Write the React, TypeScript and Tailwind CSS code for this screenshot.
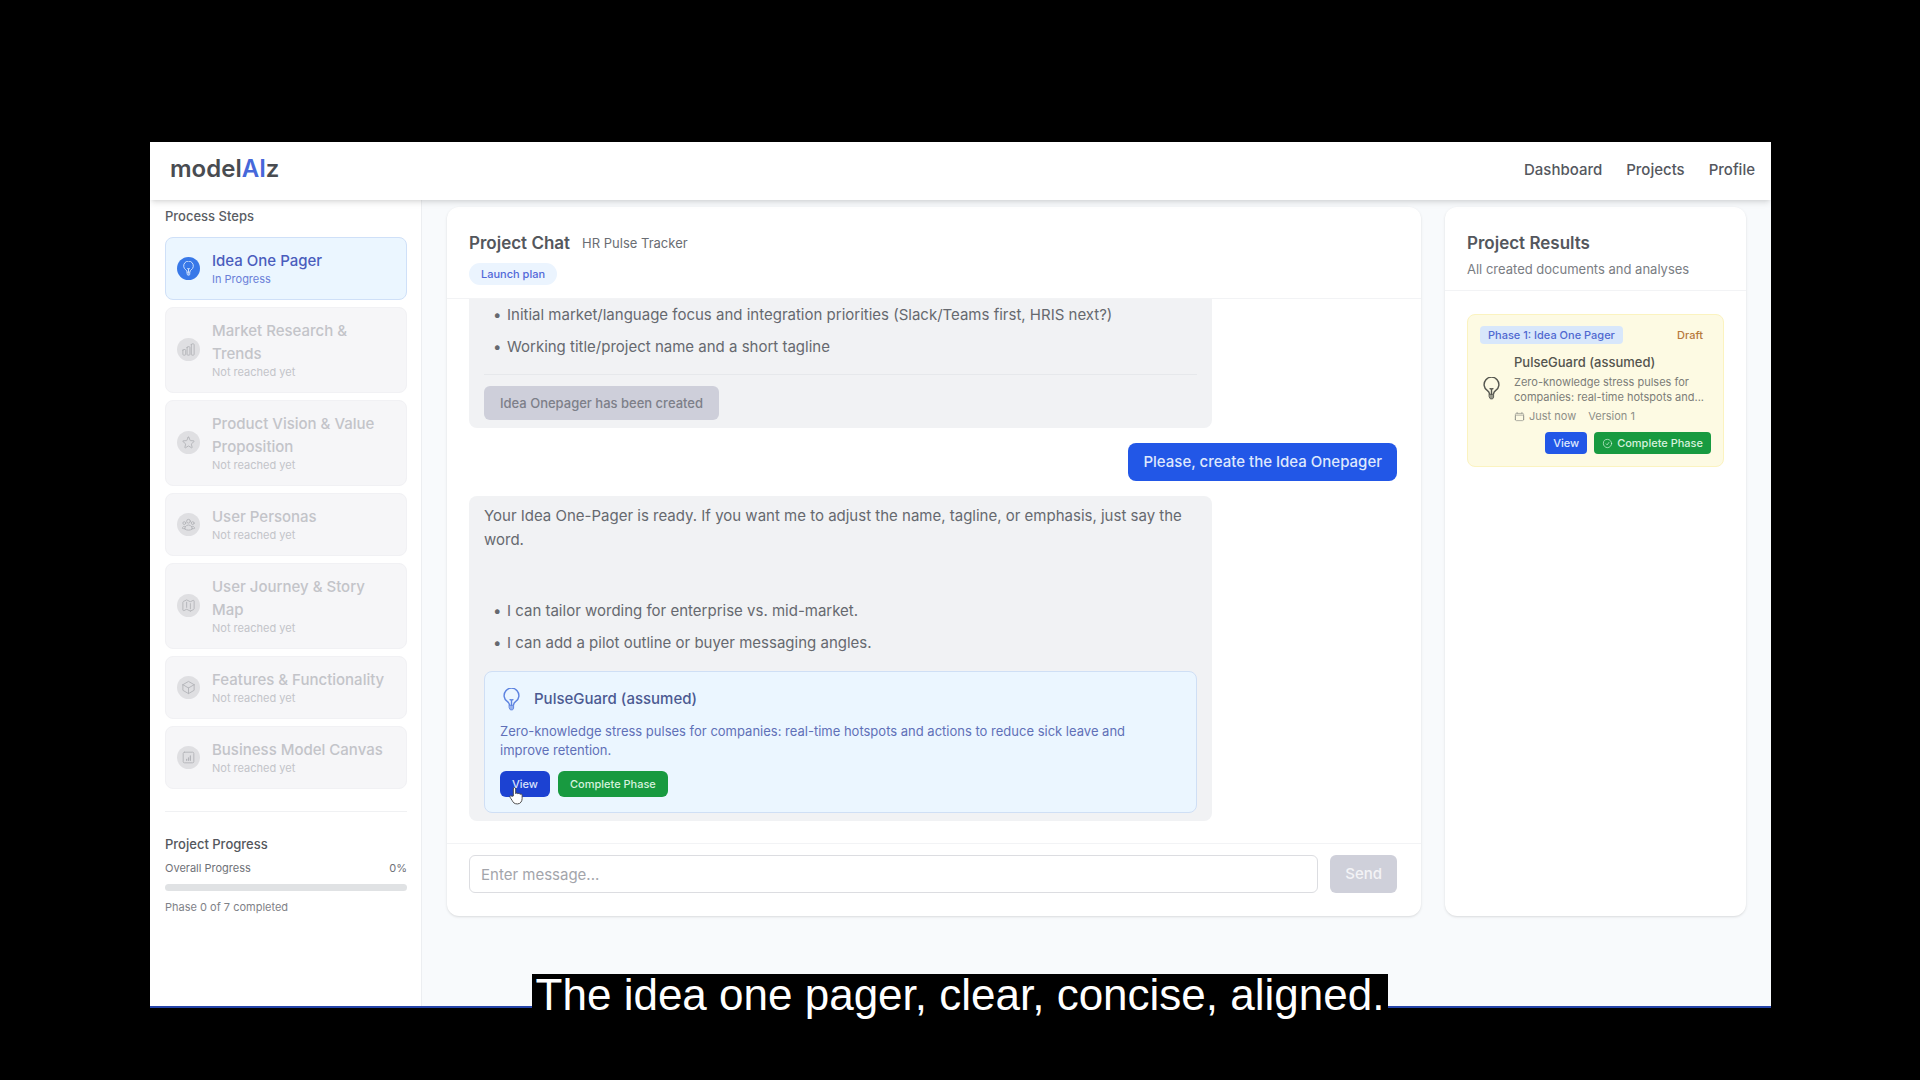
import { useState } from 'react';
import type { ReactNode } from 'react';
import {
  HiOutlineCalendar,
  HiOutlineChartBar,
  HiOutlineCheckCircle,
  HiOutlineCube,
  HiOutlineMap,
  HiOutlineStar,
  HiOutlineUserGroup,
} from 'react-icons/hi2';

const steps = [
  { title: 'Idea One Pager', status: 'In Progress', icon: BulbIcon, active: true },
  { title: 'Market Research & Trends', status: 'Not reached yet', icon: HiOutlineChartBar },
  { title: 'Product Vision & Value Proposition', status: 'Not reached yet', icon: HiOutlineStar },
  { title: 'User Personas', status: 'Not reached yet', icon: HiOutlineUserGroup },
  { title: 'User Journey & Story Map', status: 'Not reached yet', icon: HiOutlineMap },
  { title: 'Features & Functionality', status: 'Not reached yet', icon: HiOutlineCube },
  { title: 'Business Model Canvas', status: 'Not reached yet', icon: CanvasIcon },
];

function BulbIcon({ className }: { className?: string }) {
  return (
    <svg viewBox="0 0 24 24" fill="none" stroke="currentColor" strokeWidth="1.5" strokeLinecap="round" strokeLinejoin="round" className={className}>
      <path d="M9.8 17.500c0-1.400-.7-2.300-2-3.200a7.700 7.700 0 1 1 8.400 0c-1.300.9-2 1.800-2 3.200" />
      <path d="M12 18v-5.500M10.500 12.200l1.500.6 1.500-.6" />
      <path d="M9.800 18h4.400v3l-1 1.800h-2.400l-1-1.800z" fill="currentColor" fillOpacity="0.6" strokeWidth="1" />
    </svg>
  );
}

function CanvasIcon({ className }: { className?: string }) {
  return (
    <svg viewBox="0 0 24 24" fill="none" stroke="currentColor" strokeWidth="1.5" strokeLinecap="round" strokeLinejoin="round" className={className}>
      <rect x="3.5" y="3.5" width="17" height="17" rx="2" />
      <path d="M9 16.500v-1.500M12 16.500v-4M15 16.500v-7" strokeWidth="2" />
    </svg>
  );
}

function HandCursor() {
  return (
    <svg viewBox="0 0 16 20" className="absolute left-[9px] top-[15px] h-[19px] w-[15px]" aria-hidden="true">
      <path
        d="M4.600 10.500V3c0-1.900 2.500-1.900 2.500 0v5c.4-1 2.200-.9 2.400.3.500-.9 2.100-.7 2.300.5.700-.7 2.200-.3 2.200 1v3.400c0 2.600-1.500 5.800-5 5.800-3.600 0-4.600-1.700-5.600-3.600-.7-1.400-1.900-2.500-2.300-3.600-.5-1.400 1-2.100 2-.9z"
        fill="#fff"
        stroke="#444"
        strokeWidth="1"
        strokeLinejoin="round"
      />
    </svg>
  );
}

function Header() {
  return (
    <header className="relative z-10 flex h-[58px] items-center justify-between bg-white pb-1 pl-5 pr-4 shadow-md">
      <a href="#" className="text-[24px] leading-8 font-semibold text-[#494c51]">
        model<span className="text-[#4668da]">AI</span>z
      </a>
      <nav className="flex gap-6 pt-px text-[15px] leading-6 font-medium text-[#54575e]">
        <a href="#">Dashboard</a>
        <a href="#">Projects</a>
        <a href="#">Profile</a>
      </nav>
    </header>
  );
}

function Sidebar() {
  return (
    <aside className="w-[272px] shrink-0 border-r border-[#eceef1] bg-white pt-[7px] pr-[14px] pl-[15px]">
      <h2 className="mb-[11px] text-[13px] leading-[19px] font-medium text-[#5a5d64]">Process Steps</h2>
      <ul className="flex flex-col gap-[7px]">
        {steps.map((step) => (
          <li key={step.title}>
            <button
              disabled={!step.active}
              className={`flex w-full items-center gap-3 rounded-lg border px-[11px] pt-[11px] pb-3 text-left ${
                step.active ? 'border-[#cfe0f8] bg-[#ebf6ff]' : 'border-[#f1f1f4] bg-[#f6f6f8]'
              }`}
            >
              <span
                className={`flex size-[23px] shrink-0 items-center justify-center rounded-full ${
                  step.active ? 'bg-[#3878e8] text-[#d5e6fd]' : 'bg-[#dfdfe2] text-[#b4b5ba]'
                }`}
              >
                <step.icon className="size-[15px]" />
              </span>
              <span className="min-w-0 flex-1">
                <span className={`block text-[15px] leading-[23px] font-medium ${step.active ? 'text-[#4a5dbd]' : 'text-[#c3c4c9]'}`}>
                  {step.title}
                </span>
                <span className={`block text-[11px] leading-[15px] ${step.active ? 'text-[#6a80d8]' : 'text-[#c3c4c9]'}`}>
                  {step.status}
                </span>
              </span>
            </button>
          </li>
        ))}
      </ul>

      <div className="mt-[22px] border-t border-[#f0f1f3] pt-[23px]">
        <h3 className="text-[13px] leading-[18px] font-medium text-[#54575d]">Project Progress</h3>
        <div className="mt-[7px] flex justify-between text-[11px] leading-4 text-[#6f7278]">
          <span>Overall Progress</span>
          <span>0%</span>
        </div>
        <div role="progressbar" aria-valuenow={0} aria-label="Overall Progress" className="mt-2 h-[7px] rounded-full bg-[#e0e2e4]" />
        <p className="mt-2 text-[11px] leading-4 text-[#7f8288]">Phase 0 of 7 completed</p>
      </div>
    </aside>
  );
}

function BotMessage({ className, children }: { className: string; children: ReactNode }) {
  return <div className={`w-[743px] max-w-full bg-[#f1f2f4] px-[15px] text-[15px] text-[#66696f] ${className}`}>{children}</div>;
}

function BulletList({ className = '', items }: { className?: string; items: string[] }) {
  return (
    <ul className={`flex flex-col gap-2 pl-[9px] leading-6 ${className}`}>
      {items.map((item) => (
        <li key={item} className="flex before:w-[14px] before:shrink-0 before:content-['•']">
          {item}
        </li>
      ))}
    </ul>
  );
}

function Chat() {
  const [message, setMessage] = useState('');

  return (
    <section className="flex min-w-0 flex-1 flex-col rounded-xl bg-white shadow-sm">
      <div className="border-b border-[#f2f3f5] px-[22px] pt-6 pb-[13px]">
        <div className="flex items-center gap-3">
          <h1 className="text-[17px] leading-6 font-semibold text-[#54575d]">Project Chat</h1>
          <span className="text-[13px] leading-5 text-[#6a6d73]">HR Pulse Tracker</span>
        </div>
        <span className="mt-2 inline-block rounded-full bg-[#ebf4fe] px-3 text-[11px] leading-[22px] font-medium text-[#5269d8]">
          Launch plan
        </span>
      </div>

      <div className="flex flex-1 flex-col gap-[15px] pr-6 pl-[22px]">
        <BotMessage className="rounded-b-lg pt-1 pb-2">
          <BulletList
            items={[
              'Initial market/language focus and integration priorities (Slack/Teams first, HRIS next?)',
              'Working title/project name and a short tagline',
            ]}
          />
          <div className="mt-[15px] border-t border-[#e6e8eb] pt-[11px]">
            <button disabled className="rounded-md bg-[#cecfda] px-4 text-[13px] leading-[34px] font-medium text-[#7d7f89]">
              Idea Onepager has been created
            </button>
          </div>
        </BotMessage>

        <div className="self-end rounded-lg bg-[#2257e7] px-[15px] text-[15px] leading-[38px] font-medium text-[#dfe8fd]">
          Please, create the Idea Onepager
        </div>

        <BotMessage className="rounded-lg pt-2 pb-2">
          <p className="leading-6">
            Your Idea One-Pager is ready. If you want me to adjust the name, tagline, or emphasis, just say the word.
          </p>
          <BulletList
            className="mt-[47px]"
            items={['I can tailor wording for enterprise vs. mid-market.', 'I can add a pilot outline or buyer messaging angles.']}
          />
          <div className="mt-4 rounded-lg border border-[#cfdff5] bg-[#ebf6ff] p-[15px]">
            <div className="flex items-center gap-[11px]">
              <BulbIcon className="size-[23px] text-[#5d83e0]" />
              <h4 className="text-[15px] leading-6 font-medium text-[#4c5a92]">PulseGuard (assumed)</h4>
            </div>
            <p className="mt-[11px] pr-[15px] text-[13px] leading-[19px] text-[#6070b8]">
              Zero-knowledge stress pulses for companies: real-time hotspots and actions to reduce sick leave and improve retention.
            </p>
            <div className="mt-[11px] flex gap-2">
              <button className="relative rounded-md bg-[#1c42d2] px-3 text-[11px] leading-[26px] font-medium text-[#d8e1fb]">
                View
                <HandCursor />
              </button>
              <button className="rounded-md bg-[#189a40] px-3 text-[11px] leading-[26px] font-medium text-[#d6f2de]">
                Complete Phase
              </button>
            </div>
          </div>
        </BotMessage>
      </div>

      <form className="mt-[22px] flex gap-3 border-t border-[#f2f3f5] pt-[11px] pr-6 pb-[23px] pl-[22px]" onSubmit={(e) => e.preventDefault()}>
        <input
          type="text"
          aria-label="Message"
          placeholder="Enter message..."
          value={message}
          onChange={(e) => setMessage(e.target.value)}
          className="h-[38px] min-w-0 flex-1 rounded-md border border-[#dcdde1] px-[11px] text-[15px] placeholder:text-[#a3a5ab]"
        />
        <button disabled={!message} className="rounded-md bg-[#cfd0da] px-[15px] text-[15px] leading-[38px] font-medium text-[#f3f3f6]">
          Send
        </button>
      </form>
    </section>
  );
}

function Results() {
  return (
    <section className="w-[301px] shrink-0 rounded-xl bg-white shadow-sm">
      <div className="border-b border-[#f2f3f5] px-[22px] pt-6 pb-[11px]">
        <h2 className="text-[17px] leading-6 font-semibold text-[#54575d]">Project Results</h2>
        <p className="mt-1 text-[13px] leading-5 text-[#7a7d83]">All created documents and analyses</p>
      </div>
      <article className="mx-[22px] mt-[23px] rounded-lg border border-[#fbf3c0] bg-[#fdfae3] px-3 pt-[11px] pb-3">
        <div className="flex items-center justify-between pr-2">
          <span className="rounded bg-[#d8e7fb] px-2 text-[11px] leading-[18px] font-medium text-[#5069d0]">
            Phase 1: Idea One Pager
          </span>
          <span className="text-[11px] leading-[18px] font-medium text-[#b7793c]">Draft</span>
        </div>
        <div className="mt-2 flex items-center gap-[11px]">
          <BulbIcon className="size-[23px] shrink-0 text-[#55564f]" />
          <div className="min-w-0">
            <h3 className="text-[13px] leading-5 font-medium text-[#54554f]">PulseGuard (assumed)</h3>
            <p className="mt-[3px] text-[11px] leading-[15px] text-[#7c7d78]">
              Zero-knowledge stress pulses for companies: real-time hotspots and...
            </p>
            <div className="mt-[3px] flex gap-3 text-[11px] leading-4 text-[#8e8f88]">
              <span className="flex items-center gap-1">
                <HiOutlineCalendar className="size-[11px]" />
                Just now
              </span>
              <span>Version 1</span>
            </div>
          </div>
        </div>
        <div className="mt-2 flex justify-end gap-[7px]">
          <button className="rounded bg-[#2257e7] px-2 text-[11px] leading-[22px] font-medium text-[#dfe8fd]">View</button>
          <button className="flex items-center gap-1 rounded bg-[#189a40] px-2 text-[11px] leading-[22px] font-medium text-[#d6f2de]">
            <HiOutlineCheckCircle className="size-[11px]" />
            Complete Phase
          </button>
        </div>
      </article>
    </section>
  );
}

export default function App() {
  return (
    <div className="relative flex min-h-screen flex-col bg-black pt-[142px] pr-[149px] pb-[72px] pl-[150px] font-['Inter',sans-serif]">
      <div className="flex flex-1 flex-col border-b-2 border-[#2443a8] bg-[#f8fafc]">
        <Header />
        <div className="flex flex-1">
          <Sidebar />
          <main className="flex min-w-0 flex-1 gap-6 px-[25px] pt-[7px] pb-[90px]">
            <Chat />
            <Results />
          </main>
        </div>
      </div>
      <p className="absolute inset-x-0 bottom-16 z-20 text-center font-['Liberation_Sans',Arial,sans-serif] text-[44px] leading-[42px] text-white">
        <span className="inline-block bg-black px-1">The idea one pager, clear, concise, aligned.</span>
      </p>
    </div>
  );
}
